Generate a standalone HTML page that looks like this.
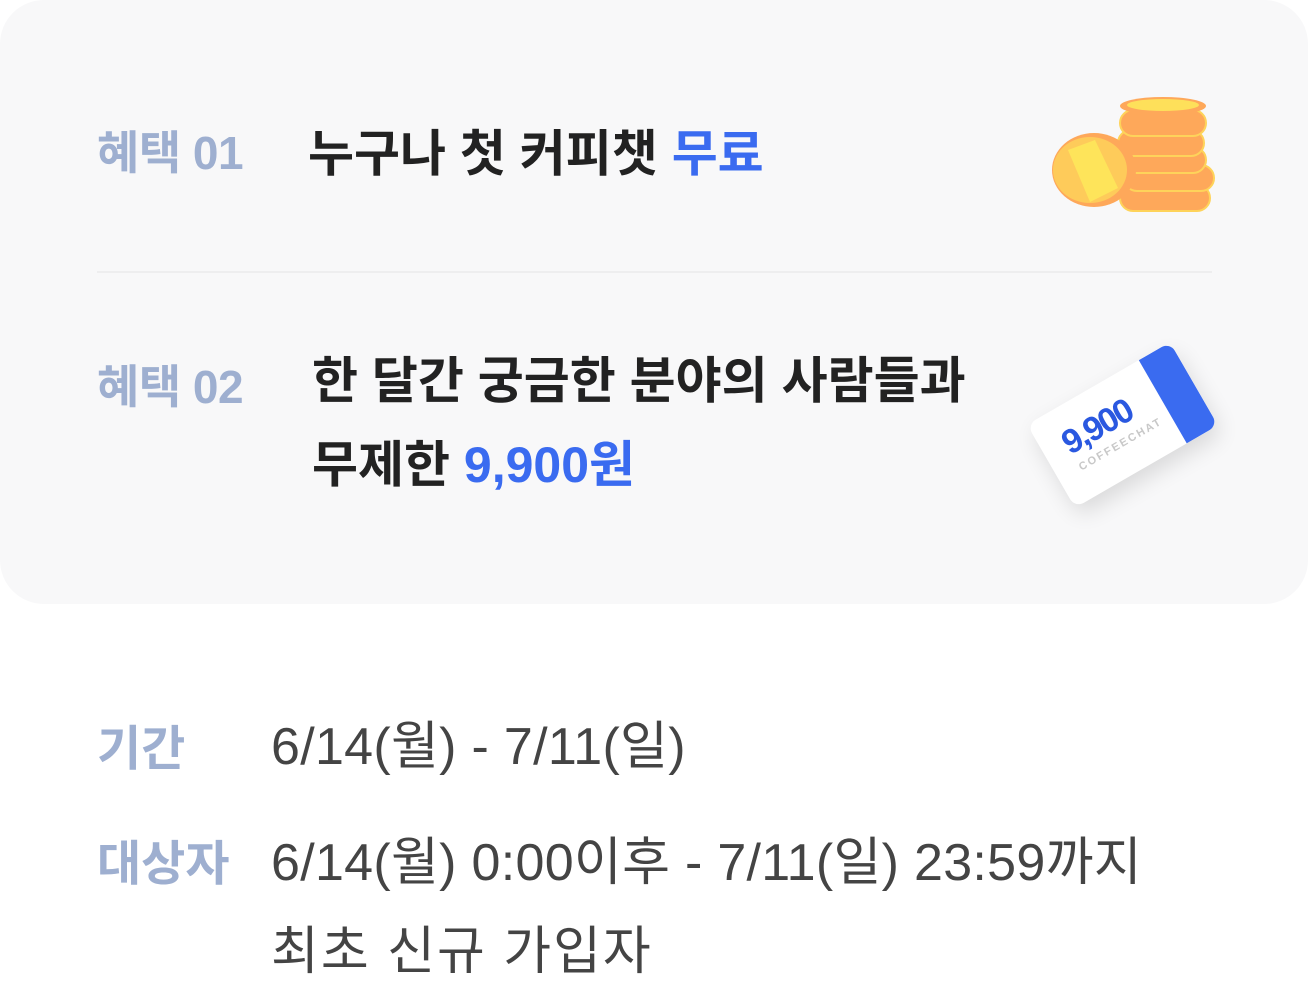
<!DOCTYPE html>
<html><head><meta charset="utf-8"><style>
body{margin:0;width:1308px;height:996px;background:#fff;font-family:"Liberation Sans","Noto Sans CJK KR",sans-serif;position:relative;overflow:hidden}
.card{position:absolute;left:0;top:0;width:1308px;height:604px;background:#f8f8f9;border-radius:44px}
.t{position:absolute;white-space:nowrap}
.lab{color:#9eafd0;font-weight:700;font-size:46px;letter-spacing:-0.5px}
.h{color:#222;font-weight:700;font-size:50px;letter-spacing:0px}
.b{color:#3a6bf0}
.v{color:#444;font-size:52px;letter-spacing:0.3px}
</style></head><body>
<div class="card"></div>
<div class="t lab" style="left:97px;top:117px">혜택 01</div>
<div class="t h" style="left:308px;top:114px">누구나 첫 커피챗 <span class="b">무료</span></div>
<div style="position:absolute;left:97px;top:271px;width:1115px;height:2px;background:#eeeeef"></div>
<div class="t lab" style="left:97px;top:351px">혜택 02</div>
<div class="t h" style="left:312px;top:339px;line-height:84px">한 달간 궁금한 분야의 사람들과<br>무제한 <span class="b">9,900원</span></div>
<svg style="position:absolute;left:1040px;top:90px" width="180" height="130" viewBox="0 0 180 130">
<g fill="#fea85a" stroke="#fed35a" stroke-width="2">
<rect x="80" y="95" width="90" height="26" rx="13"/>
<rect x="84" y="75" width="90" height="26" rx="13"/>
<rect x="80" y="57" width="86" height="26" rx="13"/>
<rect x="78" y="40" width="86" height="26" rx="13"/>
<rect x="80" y="20" width="86" height="26" rx="13"/>
</g>
<ellipse cx="123" cy="16" rx="43" ry="9" fill="#fea85a"/>
<ellipse cx="123" cy="15" rx="36" ry="6" fill="#fee05a"/>
<ellipse cx="54" cy="80" rx="42" ry="37" fill="#fea85a"/>
<ellipse cx="50" cy="80" rx="37" ry="33" fill="#fecb5a"/>
<path d="M28 60 L55 50 L78 98 L50 112 Z" fill="#fee45a"/>
</svg>
<div style="position:absolute;left:1040px;top:377px;width:165px;height:96px;background:#fff;border-radius:10px;transform:rotate(-30deg);box-shadow:0 10px 22px rgba(0,0,0,.12);overflow:hidden">
<div style="position:absolute;right:0;top:0;width:36px;height:96px;background:#3a6bf0"></div>
<div style="position:absolute;left:22px;top:18px;font-weight:700;font-size:34px;color:#2a58e0;letter-spacing:-2px">9,900</div>
<div style="position:absolute;left:24px;top:58px;font-weight:700;font-size:11px;color:#c8c8c8;letter-spacing:2px">COFFEECHAT</div>
</div>
<div class="t lab" style="left:97px;top:709px;font-size:48px;letter-spacing:0">기간</div>
<div class="t v" style="left:271px;top:704px">6/14(월) - 7/11(일)</div>
<div class="t lab" style="left:97px;top:824px;font-size:48px;letter-spacing:0">대상자</div>
<div class="t v" style="left:271px;top:819px;line-height:89px">6/14(월) 0:00이후 - 7/11(일) 23:59까지<br><span style="letter-spacing:2px">최초 신규 가입자</span></div>
</body></html>
